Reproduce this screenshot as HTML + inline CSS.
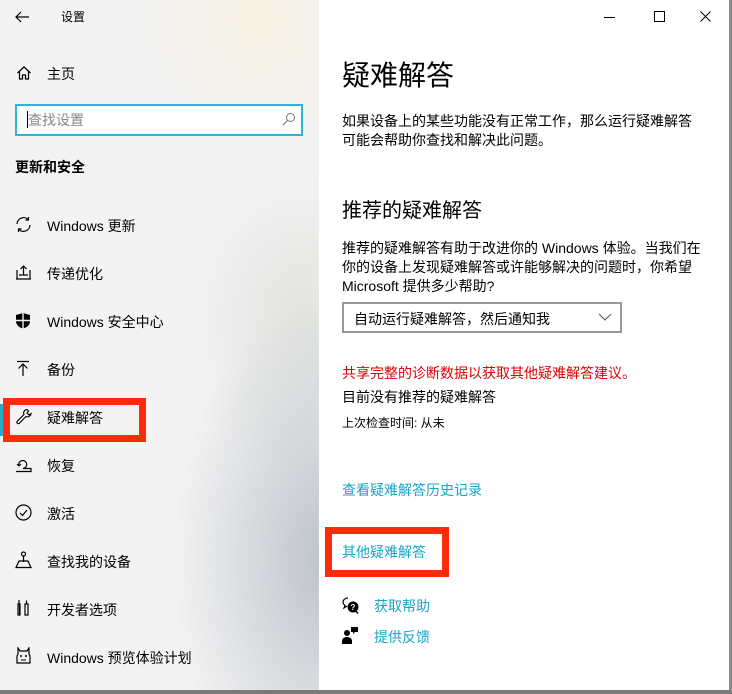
<!DOCTYPE html>
<html><head><meta charset="utf-8"><style>
*{margin:0;padding:0;box-sizing:border-box}
body{width:732px;height:694px;overflow:hidden;background:#fff;font-family:"Liberation Sans","Noto Sans CJK SC",sans-serif;color:#000;position:relative}
#left{position:absolute;left:0;top:0;width:319px;height:690px;
background:
radial-gradient(ellipse 160px 260px at 330px 560px,rgba(170,178,188,.75),rgba(170,178,188,0)),
radial-gradient(ellipse 120px 160px at 300px 320px,rgba(215,218,212,.6),rgba(215,218,212,0)),
radial-gradient(ellipse 120px 120px at 260px 20px,rgba(248,242,220,.7),rgba(248,242,220,0)),
#f3f3f3}
#right{position:absolute;left:319px;top:0;width:410px;height:690px;background:#fff}
#rb{position:absolute;left:729px;top:0;width:3px;height:694px;background:#8a8a8a}
#bb{position:absolute;left:0;top:690px;width:732px;height:4px;background:#7a7a7a}
.t{position:absolute;white-space:nowrap;font-size:14px}
.ic{position:absolute}
.red{position:absolute;border:7px solid #ff2a0a}
.link{color:#1aa3c8}
</style></head><body>
<div id="left">
<svg class="ic" style="left:14px;top:9px" width="16" height="16" viewBox="0 0 16 16"><path d="M15 8H2M7 3L2 8l5 5" fill="none" stroke="#000" stroke-width="1.2"/></svg>
<div class="t" style="left:61px;top:8px;font-size:12px">设置</div>
<svg class="ic" style="left:16px;top:65px" width="16" height="16" viewBox="0 0 16 16"><path d="M1.5 8L8 2l6.5 6M3.5 6.5V14h3v-4h3v4h3V6.5" fill="none" stroke="#000" stroke-width="1.2"/></svg>
<div class="t" style="left:47px;top:64px">主页</div>
<div style="position:absolute;left:15px;top:104px;width:288px;height:32px;border:2px solid #2eb6d2;background:#fff"></div>
<div style="position:absolute;left:27px;top:111px;width:1px;height:17px;background:#000"></div>
<div class="t" style="left:28px;top:110px;color:#888">查找设置</div>
<svg class="ic" style="left:282px;top:112px" width="14" height="14" viewBox="0 0 14 14"><circle cx="8.5" cy="5.5" r="4" fill="none" stroke="#777" stroke-width="1"/><path d="M5.5 8.5L1 13" stroke="#777" stroke-width="1.2"/></svg>
<div class="t" style="left:15px;top:157px;font-weight:bold">更新和安全</div>

<svg class="ic" style="left:15px;top:216px" width="17" height="17" viewBox="0 0 17 17"><path d="M2 8A6.5 6.5 0 0 1 13.5 4M15 9a6.5 6.5 0 0 1-11.5 4M13.5 1v3h-3M3.5 16v-3h3" fill="none" stroke="#000" stroke-width="1.2"/></svg>
<div class="t" style="left:47px;top:216px">Windows 更新</div>
<svg class="ic" style="left:15px;top:264px" width="17" height="17" viewBox="0 0 17 17"><path d="M1 15h15M2 15V6M15 15V6M8.5 11V2M5.5 5l3-3 3 3M4 11h9" fill="none" stroke="#000" stroke-width="1.2"/></svg>
<div class="t" style="left:47px;top:264px">传递优化</div>
<svg class="ic" style="left:15px;top:312px" width="16" height="17" viewBox="0 0 16 17"><path d="M8 1L15 3v6c0 4-3 6.5-7 7.5C4 15.5 1 13 1 9V3z" fill="#000"/><path d="M8 1v16M1 8.5h14" stroke="#f3f3f3" stroke-width="1.4"/></svg>
<div class="t" style="left:47px;top:312px">Windows 安全中心</div>
<svg class="ic" style="left:15px;top:360px" width="16" height="17" viewBox="0 0 16 17"><path d="M2 1.5h12M8 16V4M3.5 8.5L8 4l4.5 4.5" fill="none" stroke="#000" stroke-width="1.2"/></svg>
<div class="t" style="left:47px;top:360px">备份</div>
<div style="position:absolute;left:0;top:404px;width:4px;height:32px;background:#2ea8c8"></div>
<svg class="ic" style="left:15px;top:408px" width="17" height="17" viewBox="0 0 17 17"><path d="M12 1.5a3.5 3.5 0 0 0-3 5L2 13.5a1.5 1.5 0 0 0 2 2l7-7a3.5 3.5 0 0 0 5-3l-2 1.5-2-2 1.5-2z" fill="none" stroke="#000" stroke-width="1.1"/></svg>
<div class="t" style="left:47px;top:408px">疑难解答</div>
<svg class="ic" style="left:15px;top:456px" width="17" height="17" viewBox="0 0 17 17"><path d="M1 15.5h15v-3H8M4 10a4 4 0 1 1 4 2.5M4 10l-2-2M4 10l2-2" fill="none" stroke="#000" stroke-width="1.2"/></svg>
<div class="t" style="left:47px;top:456px">恢复</div>
<svg class="ic" style="left:15px;top:504px" width="17" height="17" viewBox="0 0 17 17"><circle cx="8.5" cy="8.5" r="7.5" fill="none" stroke="#000" stroke-width="1.2"/><path d="M5 9l2.5 2.5L12 6" fill="none" stroke="#000" stroke-width="1.2"/></svg>
<div class="t" style="left:47px;top:504px">激活</div>
<svg class="ic" style="left:15px;top:551px" width="17" height="18" viewBox="0 0 17 18"><circle cx="8.5" cy="3" r="2" fill="none" stroke="#000" stroke-width="1.2"/><path d="M8.5 5v6M1 16.5h15L13 10H4z" fill="none" stroke="#000" stroke-width="1.2"/></svg>
<div class="t" style="left:47px;top:552px">查找我的设备</div>
<svg class="ic" style="left:17px;top:599px" width="12" height="18" viewBox="0 0 12 18"><path d="M2 1v4M1.5 5h1v11M2 5M9.5 1.5v3.5M8 5h3v11H8zM1 5h2v11H1z" fill="none" stroke="#000" stroke-width="1.2"/></svg>
<div class="t" style="left:47px;top:600px">开发者选项</div>
<svg class="ic" style="left:15px;top:647px" width="17" height="18" viewBox="0 0 17 18"><path d="M3 1l2 3h7l2-3v6a6 6 0 0 1 1 4v5H2v-5a6 6 0 0 1 1-4z" fill="none" stroke="#000" stroke-width="1.2"/><circle cx="6" cy="9" r="1" fill="#000"/><circle cx="11" cy="9" r="1" fill="#000"/><path d="M6 13h5" stroke="#000"/></svg>
<div class="t" style="left:47px;top:648px">Windows 预览体验计划</div>
</div>
<div class="red" style="left:3px;top:398px;width:143px;height:44px"></div>

<div id="right">
<svg class="ic" style="left:284px;top:10px" width="14" height="14" viewBox="0 0 14 14"><path d="M1 7.5h11" stroke="#000" stroke-width="1"/></svg>
<svg class="ic" style="left:334px;top:10px" width="14" height="14" viewBox="0 0 14 14"><rect x="1.5" y="1.5" width="10" height="10" fill="none" stroke="#000" stroke-width="1"/></svg>
<svg class="ic" style="left:380px;top:10px" width="14" height="14" viewBox="0 0 14 14"><path d="M1.5 1.5l10 10M11.5 1.5l-10 10" stroke="#000" stroke-width="1"/></svg>
<div class="t" style="left:23px;top:54px;font-size:28px">疑难解答</div>
<div class="t" style="left:23px;top:111px">如果设备上的某些功能没有正常工作，那么运行疑难解答</div>
<div class="t" style="left:23px;top:130px">可能会帮助你查找和解决此问题。</div>
<div class="t" style="left:23px;top:194px;font-size:20px">推荐的疑难解答</div>
<div class="t" style="left:23px;top:238px">推荐的疑难解答有助于改进你的 Windows 体验。当我们在</div>
<div class="t" style="left:23px;top:257px">你的设备上发现疑难解答或许能够解决的问题时，你希望</div>
<div class="t" style="left:23px;top:276px">Microsoft 提供多少帮助?</div>
<div style="position:absolute;left:23px;top:302px;width:280px;height:31px;border:2px solid #999"></div>
<div class="t" style="left:35px;top:309px">自动运行疑难解答，然后通知我</div>
<svg class="ic" style="left:279px;top:312px" width="14" height="10" viewBox="0 0 14 10"><path d="M1 2l6 6 6-6" fill="none" stroke="#555" stroke-width="1"/></svg>
<div class="t" style="left:23px;top:363px;color:#e00000">共享完整的诊断数据以获取其他疑难解答建议。</div>
<div class="t" style="left:23px;top:387px">目前没有推荐的疑难解答</div>
<div class="t" style="left:23px;top:414px;font-size:12px">上次检查时间: 从未</div>
<div class="t link" style="left:23px;top:480px">查看疑难解答历史记录</div>
<div class="t link" style="left:23px;top:542px">其他疑难解答</div>
<svg class="ic" style="left:23px;top:597px" width="17" height="17" viewBox="0 0 17 17"><path d="M6 1a5 4 0 0 0-5 4c0 1.5.8 2.5 2 3.3L2 11l3-2" fill="none" stroke="#000" stroke-width="1.2"/><circle cx="11" cy="10" r="5.5" fill="#000"/><text x="11" y="13" font-size="8" fill="#fff" text-anchor="middle" font-weight="bold">?</text><path d="M14 14l2 2.5" stroke="#000" stroke-width="1.5"/></svg>
<div class="t link" style="left:55px;top:596px">获取帮助</div>
<svg class="ic" style="left:23px;top:627px" width="16" height="17" viewBox="0 0 16 17"><circle cx="5" cy="6" r="3" fill="#000"/><path d="M0 17v-3a5 4 0 0 1 10 0v3z" fill="#000"/><path d="M9 0h7v5h-3l-2 2V5H9z" fill="#000"/></svg>
<div class="t link" style="left:55px;top:627px">提供反馈</div>
</div>
<div class="red" style="left:325px;top:527px;width:124px;height:50px"></div>
<div id="rb"></div>
<div id="bb"></div>
</body></html>
